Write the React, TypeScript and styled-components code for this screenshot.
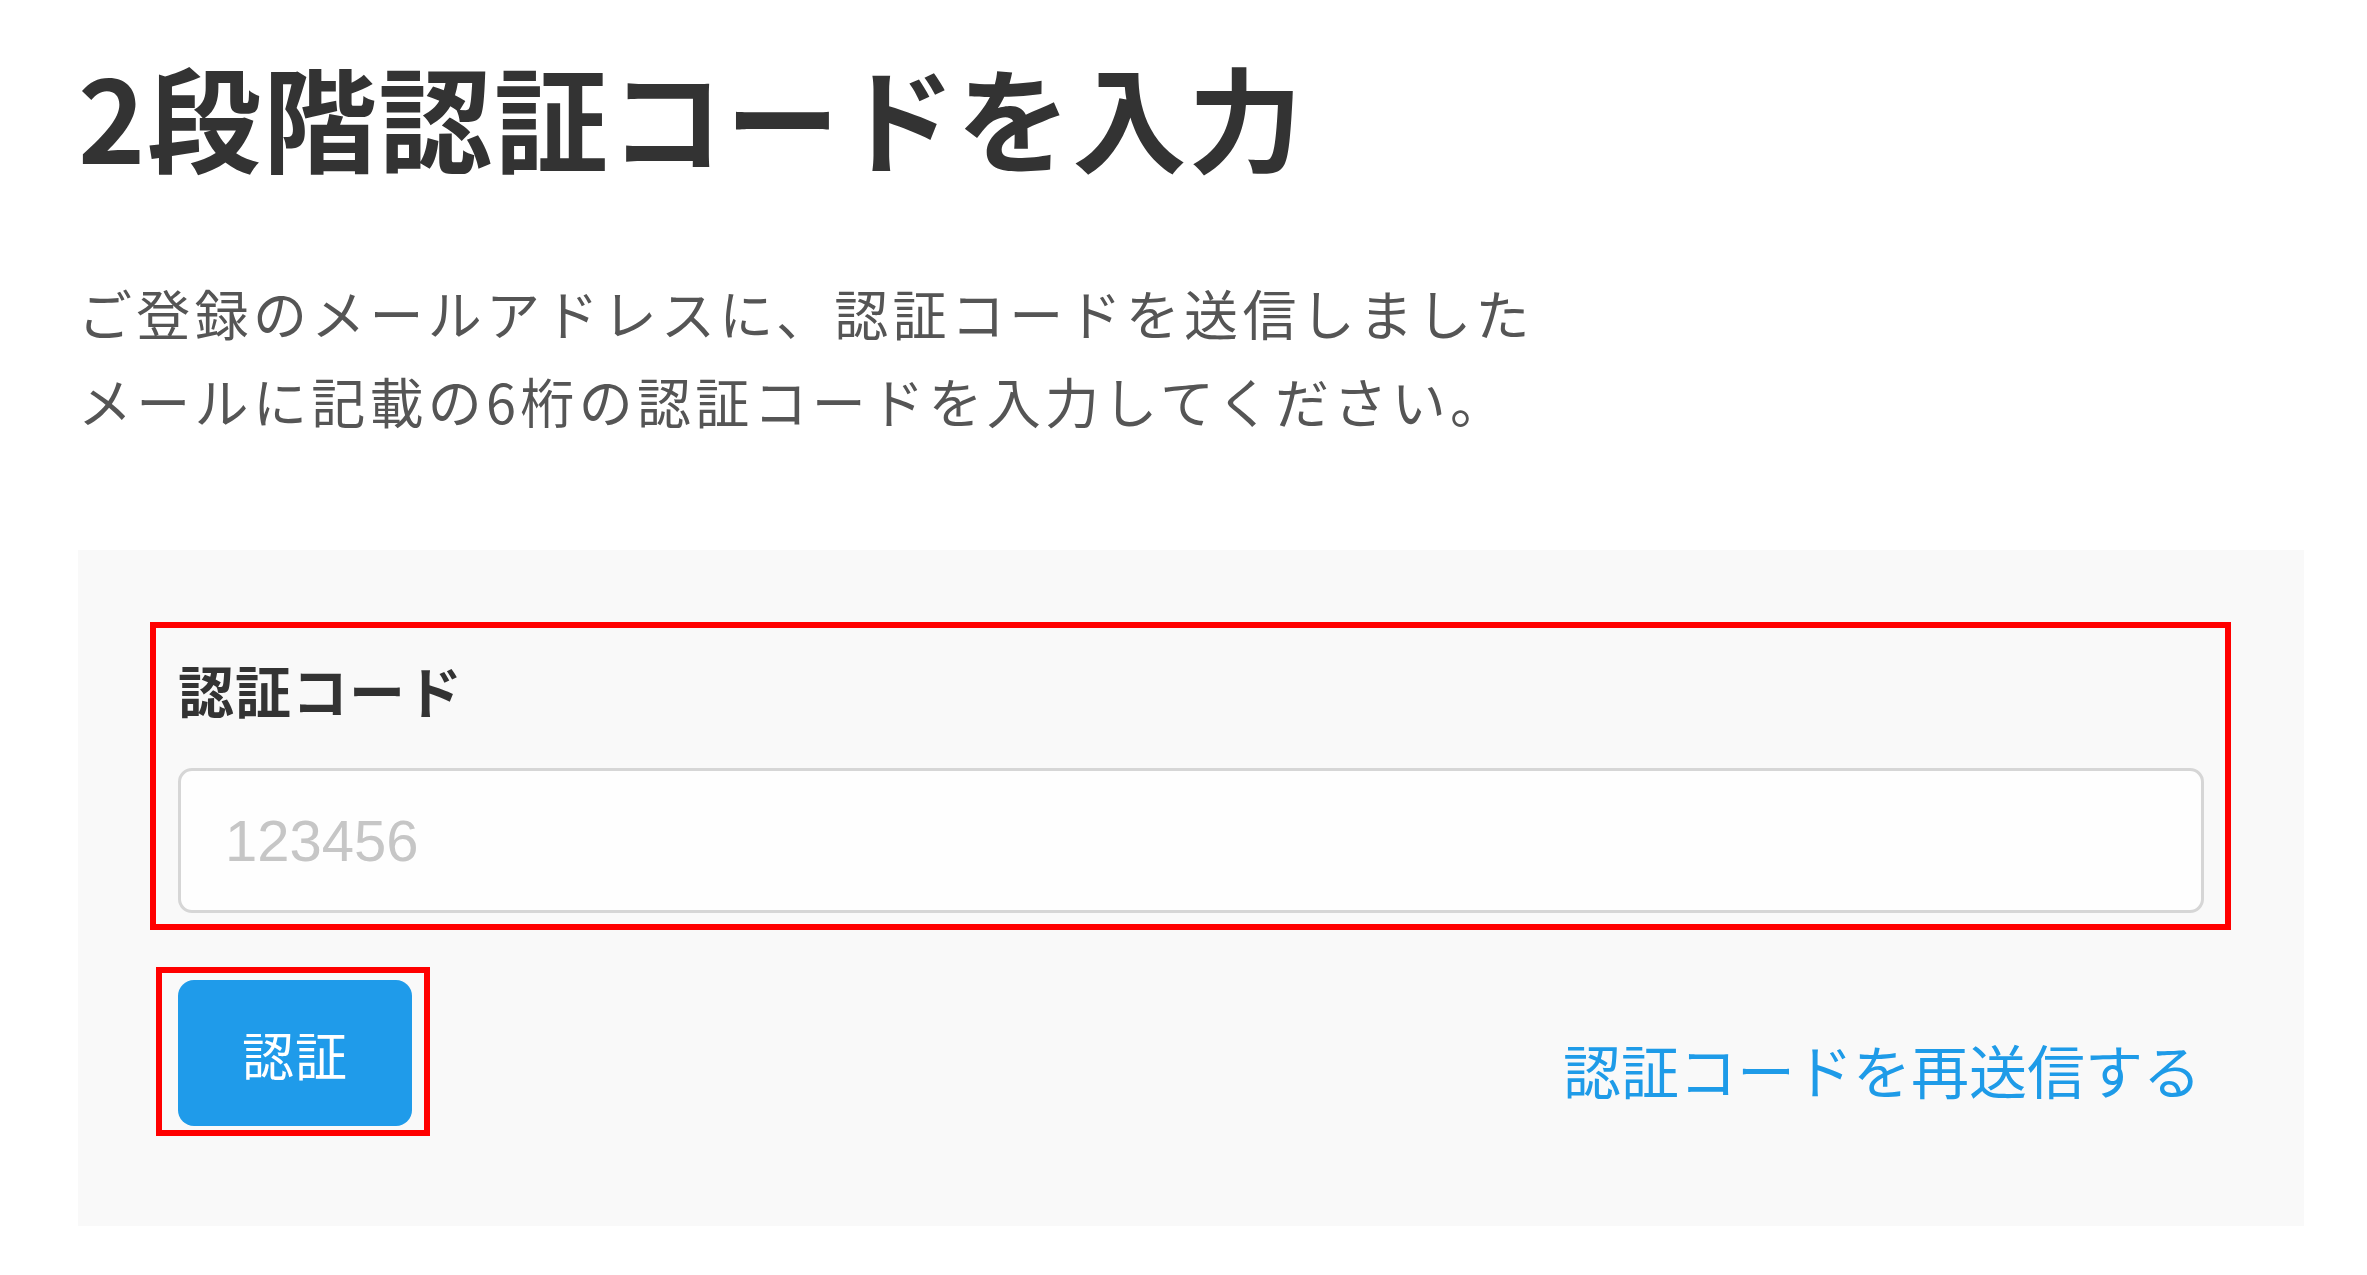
import React from "react";
import styled, { createGlobalStyle } from "styled-components";

const GlobalStyle = createGlobalStyle`
  html, body {
    margin: 0;
    padding: 0;
    background: #ffffff;
  }
  body {
    font-family: "Noto Sans CJK JP", "Noto Sans", sans-serif;
    color: #333333;
  }
  * { box-sizing: border-box; }
`;

const Page = styled.main`
  display: flex;
  flex-direction: column;
  padding: 46px 63px 40px 78px;
`;

const Title = styled.h1`
  margin: 0;
  font-family: "Noto Sans CJK JP", sans-serif;
  font-size: 114px;
  line-height: 137px;
  font-weight: 700;
  letter-spacing: 1.7px;
  color: #333333;
`;

const Lead = styled.p`
  margin: 86px 0 0;
  font-family: "Noto Sans CJK JP", sans-serif;
  font-size: 54px;
  line-height: 88px;
  font-weight: 400;
  letter-spacing: 4.3px;
  color: #555555;
`;

const Panel = styled.section`
  margin-top: 105px;
  width: 2226px;
  background: #f9f9f9;
  padding: 72px 73px 90px 72px;
  display: flex;
  flex-direction: column;
`;

const Highlight = styled.div<{ $pad: string; $ml?: number }>`
  border: 6px solid #ff0000;
  padding: ${(p) => p.$pad};
  margin-left: ${(p) => p.$ml ?? 0}px;
`;

const Label = styled.label`
  display: block;
  font-family: "Noto Sans CJK JP", sans-serif;
  font-size: 56px;
  line-height: 78px;
  font-weight: 700;
  letter-spacing: 1px;
  color: #333333;
`;

const CodeInput = styled.input`
  display: block;
  width: 100%;
  height: 145px;
  margin-top: 40px;
  padding: 0 0 0 44px;
  border: 3px solid #d6d6d6;
  border-radius: 14px;
  background: #fefefe;
  font-family: "Liberation Sans", Arial, sans-serif;
  font-size: 58px;
  color: #333333;
  outline: none;
  &::placeholder {
    color: #c6c6c6;
  }
`;

const ActionRow = styled.div`
  margin-top: 37px;
  display: flex;
  justify-content: space-between;
  align-items: flex-start;
`;

const VerifyButton = styled.button`
  width: 234px;
  height: 146px;
  border: none;
  border-radius: 16px;
  background: #1f9bea;
  color: #ffffff;
  font-family: "Noto Sans CJK JP", sans-serif;
  font-size: 52px;
  font-weight: 400;
  letter-spacing: 1px;
  cursor: pointer;
  display: flex;
  align-items: center;
  justify-content: center;
`;

const ResendLink = styled.a`
  margin-top: 62px;
  margin-right: 30px;
  font-family: "Noto Sans CJK JP", sans-serif;
  font-size: 58px;
  line-height: 81px;
  letter-spacing: 0;
  color: #1e9be8;
  text-decoration: none;
  cursor: pointer;
`;

export default function App() {
  return (
    <>
      <GlobalStyle />
      <Page>
        <Title>2段階認証コードを入力</Title>
        <Lead>
          ご登録のメールアドレスに、認証コードを送信しました
          <br />
          メールに記載の6桁の認証コードを入力してください。
        </Lead>
        <Panel>
          <Highlight $pad="22px 21px 11px 22px">
            <Label htmlFor="code">認証コード</Label>
            <CodeInput id="code" placeholder="123456" />
          </Highlight>
          <ActionRow>
            <Highlight $pad="7px 12px 4px 16px" $ml={6}>
              <VerifyButton>認証</VerifyButton>
            </Highlight>
            <ResendLink>認証コードを再送信する</ResendLink>
          </ActionRow>
        </Panel>
      </Page>
    </>
  );
}
